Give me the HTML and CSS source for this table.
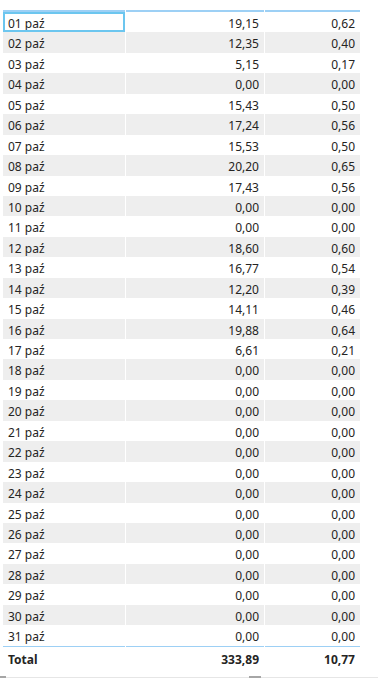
FILE: index.html
```html
<!DOCTYPE html>
<html lang="pl">
<head>
<meta charset="utf-8">
<title>Tabela</title>
<link rel="stylesheet" href="styles.css">
</head>
<body>
<div class="page">
  <div class="table">
    <div class="row head">
      <div class="cell"></div>
      <div class="cell num"></div>
      <div class="cell num"></div>
    </div>
    <div class="row"><div class="cell focus">01 paź</div><div class="cell num">19,15</div><div class="cell num">0,62</div></div>
    <div class="row alt"><div class="cell">02 paź</div><div class="cell num">12,35</div><div class="cell num">0,40</div></div>
    <div class="row"><div class="cell">03 paź</div><div class="cell num">5,15</div><div class="cell num">0,17</div></div>
    <div class="row alt"><div class="cell">04 paź</div><div class="cell num">0,00</div><div class="cell num">0,00</div></div>
    <div class="row"><div class="cell">05 paź</div><div class="cell num">15,43</div><div class="cell num">0,50</div></div>
    <div class="row alt"><div class="cell">06 paź</div><div class="cell num">17,24</div><div class="cell num">0,56</div></div>
    <div class="row"><div class="cell">07 paź</div><div class="cell num">15,53</div><div class="cell num">0,50</div></div>
    <div class="row alt"><div class="cell">08 paź</div><div class="cell num">20,20</div><div class="cell num">0,65</div></div>
    <div class="row"><div class="cell">09 paź</div><div class="cell num">17,43</div><div class="cell num">0,56</div></div>
    <div class="row alt"><div class="cell">10 paź</div><div class="cell num">0,00</div><div class="cell num">0,00</div></div>
    <div class="row"><div class="cell">11 paź</div><div class="cell num">0,00</div><div class="cell num">0,00</div></div>
    <div class="row alt"><div class="cell">12 paź</div><div class="cell num">18,60</div><div class="cell num">0,60</div></div>
    <div class="row"><div class="cell">13 paź</div><div class="cell num">16,77</div><div class="cell num">0,54</div></div>
    <div class="row alt"><div class="cell">14 paź</div><div class="cell num">12,20</div><div class="cell num">0,39</div></div>
    <div class="row"><div class="cell">15 paź</div><div class="cell num">14,11</div><div class="cell num">0,46</div></div>
    <div class="row alt"><div class="cell">16 paź</div><div class="cell num">19,88</div><div class="cell num">0,64</div></div>
    <div class="row"><div class="cell">17 paź</div><div class="cell num">6,61</div><div class="cell num">0,21</div></div>
    <div class="row alt"><div class="cell">18 paź</div><div class="cell num">0,00</div><div class="cell num">0,00</div></div>
    <div class="row"><div class="cell">19 paź</div><div class="cell num">0,00</div><div class="cell num">0,00</div></div>
    <div class="row alt"><div class="cell">20 paź</div><div class="cell num">0,00</div><div class="cell num">0,00</div></div>
    <div class="row"><div class="cell">21 paź</div><div class="cell num">0,00</div><div class="cell num">0,00</div></div>
    <div class="row alt"><div class="cell">22 paź</div><div class="cell num">0,00</div><div class="cell num">0,00</div></div>
    <div class="row"><div class="cell">23 paź</div><div class="cell num">0,00</div><div class="cell num">0,00</div></div>
    <div class="row alt"><div class="cell">24 paź</div><div class="cell num">0,00</div><div class="cell num">0,00</div></div>
    <div class="row"><div class="cell">25 paź</div><div class="cell num">0,00</div><div class="cell num">0,00</div></div>
    <div class="row alt"><div class="cell">26 paź</div><div class="cell num">0,00</div><div class="cell num">0,00</div></div>
    <div class="row"><div class="cell">27 paź</div><div class="cell num">0,00</div><div class="cell num">0,00</div></div>
    <div class="row alt"><div class="cell">28 paź</div><div class="cell num">0,00</div><div class="cell num">0,00</div></div>
    <div class="row"><div class="cell">29 paź</div><div class="cell num">0,00</div><div class="cell num">0,00</div></div>
    <div class="row alt"><div class="cell">30 paź</div><div class="cell num">0,00</div><div class="cell num">0,00</div></div>
    <div class="row"><div class="cell">31 paź</div><div class="cell num">0,00</div><div class="cell num">0,00</div></div>
    <div class="row total"><div class="cell">Total</div><div class="cell num">333,89</div><div class="cell num">10,77</div></div>
  </div>
  <div class="scrollbar">
    <span class="thumb thumb-left"></span>
    <span class="thumb thumb-mid"></span>
  </div>
</div>
</body>
</html>
```

FILE: styles.css
```css
html, body {
  margin: 0;
  padding: 0;
  background: #ffffff;
}

.page {
  width: 378px;
  height: 678px;
  overflow: hidden;
  display: flex;
  flex-direction: column;
  font-family: "Noto Sans", "Open Sans", sans-serif;
  font-size: 12px;
  color: #252423;
}

.table {
  margin-left: 3px;
  width: 357px;
  display: grid;
  grid-template-columns: 122px 138px 95px;
  column-gap: 1px;
}

.row {
  display: contents;
}

.cell {
  height: 20.45px;
  line-height: 23px;
  padding: 0 5px;
  white-space: nowrap;
  overflow: hidden;
  background: #ffffff;
}

.cell.num {
  text-align: right;
}

.row.alt .cell {
  background: #eeeeee;
}

.row.head .cell {
  height: 10px;
  border-bottom: 2px solid #9dd0f5;
}

.cell.focus {
  outline: 2px solid #6cc6ef;
  outline-offset: -2px;
}

.row.total .cell {
  height: 26px;
  line-height: 26px;
  font-weight: 700;
  border-top: 1px solid #9dd0f5;
}

.scrollbar {
  position: relative;
  height: 5px;
  margin-top: 1px;
  border-top: 3px solid #ffffff;
  background: #e6e6e6;
}

.thumb {
  position: absolute;
  top: -1px;
  height: 3px;
  background: #a6a6a6;
}

.thumb-left {
  left: 0;
  width: 6px;
}

.thumb-mid {
  left: 249px;
  width: 12px;
}
```
